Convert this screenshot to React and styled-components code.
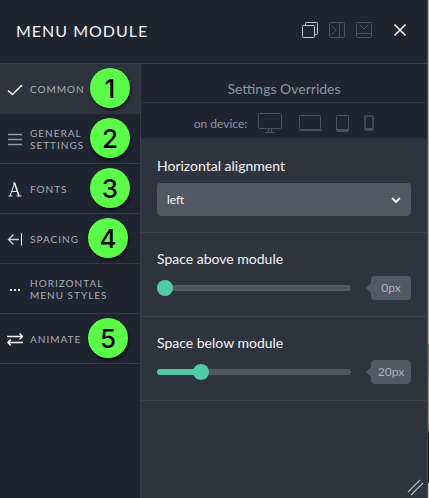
import { useState } from "react";
import styled, { createGlobalStyle } from "styled-components";

const GlobalStyle = createGlobalStyle`
  * {
    box-sizing: border-box;
  }
  body {
    margin: 0;
    background: linear-gradient(
      to bottom,
      #a9abb0 69%,
      #7d6468 69%,
      #9a7f78 78%,
      #8a8070 86%,
      #17181c 87%,
      #17181c 97%,
      #c4c6cc 97%
    );
    font-family: Lato, "Open Sans", sans-serif;
  }
  button, select, input {
    font-family: inherit;
  }
`;

const Panel = styled.div`
  position: relative;
  display: flex;
  flex-direction: column;
  min-height: 100vh;
  margin-right: 1px;
  border-right: 1px solid #444a54;
  background: #2e343e;
  color: #f4f5f7;
`;

const Header = styled.header`
  display: flex;
  align-items: center;
  justify-content: space-between;
  height: 64px;
  padding: 0 20px 4px 16px;
  border-bottom: 1px solid #3c424d;
  background: #1f2431;
`;

const Title = styled.h1`
  margin: 0;
  padding-top: 3px;
  font-size: 16px;
  font-weight: normal;
  line-height: 20px;
  letter-spacing: 1px;
`;

const Actions = styled.div`
  display: flex;
  align-items: center;
  gap: 11px;
`;

const IconButton = styled.button`
  display: flex;
  padding: 0;
  border: 0;
  margin-left: ${(props) => (props.$spaced ? "10px" : "0")};
  background: none;
  color: ${(props) => props.$color};
`;

const Body = styled.div`
  display: flex;
  flex: 1;
`;

const Sidebar = styled.nav`
  flex: none;
  width: 141px;
  border-right: 1px solid #363c47;
  background: #1f2431;
`;

const Tab = styled.button`
  position: relative;
  display: flex;
  align-items: center;
  gap: 7px;
  width: 100%;
  height: 50px;
  padding: 0 0 0 7px;
  border: 0;
  border-bottom: 1px solid ${(props) => (props.$active ? "#2e343e" : "#343a45")};
  background: ${(props) => (props.$active ? "#2e343e" : "#1f2431")};
  color: #a9adb8;
  font-size: 10px;
  line-height: 12px;
  letter-spacing: 1px;
  text-align: left;
  text-transform: uppercase;
`;

const TabLabel = styled.span`
  width: ${(props) => (props.$wide ? "90px" : "64px")};
`;

const Badge = styled.span`
  position: absolute;
  top: 4px;
  right: ${(props) => (props.$shifted ? "12px" : "10px")};
  width: 40px;
  height: 40px;
  border-radius: 50%;
  background: #5bfd49;
  box-shadow: 1px 2px 3px rgba(0, 0, 0, 0.7);
  color: #000;
  font-family: Inter, "Liberation Sans", sans-serif;
  font-size: 26px;
  font-weight: 500;
  line-height: 41px;
  letter-spacing: 0;
  text-align: center;
`;

const Content = styled.main`
  flex: 1;
  min-width: 0;
`;

const Overrides = styled.div`
  background: #1f2431;
  color: #8d95a5;
`;

const OverridesTitle = styled.h2`
  height: 39px;
  margin: 0;
  padding-top: 15px;
  border-bottom: 1px solid #2e343f;
  font-size: 14px;
  font-weight: normal;
  line-height: 20px;
  text-align: center;
`;

const Devices = styled.div`
  display: flex;
  align-items: center;
  justify-content: center;
  height: 35px;
  padding-top: 5px;
  font-size: 12px;
`;

const DeviceButton = styled(IconButton)`
  margin-left: ${(props) => props.$gap}px;
`;

const Section = styled.section`
  height: ${(props) => (props.$tall ? "95px" : "84px")};
  padding: ${(props) => (props.$tall ? "18px" : "16px")} 16px 0;
  border-bottom: 1px solid #3b414c;
`;

const Label = styled.label`
  display: block;
  font-size: 14px;
  line-height: 20px;
`;

const SelectWrap = styled.div`
  position: relative;
  margin-top: 7px;
  svg {
    position: absolute;
    top: 13px;
    right: 10px;
    pointer-events: none;
  }
`;

const Select = styled.select`
  appearance: none;
  display: block;
  width: 100%;
  height: 33px;
  padding: 0 10px;
  border: 0;
  border-radius: 4px;
  background: #505964;
  color: #f4f5f7;
  font-size: 12px;
`;

const SliderRow = styled.div`
  display: flex;
  align-items: center;
  gap: 20px;
  margin-top: 7px;
`;

const Range = styled.input`
  appearance: none;
  flex: 1;
  min-width: 0;
  height: 16px;
  margin: 0;
  background: none;
  &::-webkit-slider-runnable-track {
    height: 6px;
    border-radius: 3px;
    background: linear-gradient(
      to right,
      #50cba4 var(--fill),
      #505964 var(--fill)
    );
  }
  &::-webkit-slider-thumb {
    appearance: none;
    width: 16px;
    height: 16px;
    margin-top: -5px;
    border-radius: 50%;
    background: #50cba4;
  }
`;

const Value = styled.output`
  position: relative;
  flex: none;
  width: 40px;
  border-radius: 4px;
  background: #505964;
  color: #a8b4c2;
  font-size: 12px;
  line-height: 24px;
  text-align: center;
  &::before {
    content: "";
    position: absolute;
    top: 7px;
    right: 100%;
    border: 5px solid transparent;
    border-left: 0;
    border-right-color: #505964;
  }
`;

const ResizeHandle = styled.svg`
  position: absolute;
  right: 3px;
  bottom: 2px;
`;

function Icon({ width, height, children }) {
  return (
    <svg
      width={width}
      height={height}
      viewBox={`0 0 ${width} ${height}`}
      fill="none"
      stroke="currentColor"
      aria-hidden="true"
    >
      {children}
    </svg>
  );
}

const tabs = [
  {
    label: "Common",
    badge: 1,
    icon: <path d="M1 9.5L5.5 13.5L15 4" stroke="#fff" strokeWidth="1.5" />,
  },
  {
    label: "General settings",
    badge: 2,
    icon: <path d="M1 3.5H15M1 8.5H15M1 13.5H15" stroke="#9599a5" strokeWidth="1.5" />,
  },
  {
    label: "Fonts",
    badge: 3,
    icon: (
      <>
        <path d="M3 15L7.5 2.5M4.5 10.5H10.5M1.5 15H5.5M9.5 15H14.5M6 2H8.5" stroke="#e8eaee" />
        <path d="M7.5 2L12 15" stroke="#fff" strokeWidth="1.6" />
      </>
    ),
  },
  {
    label: "Spacing",
    badge: 4,
    shifted: true,
    icon: (
      <>
        <path d="M12 8.5H1.5M6.5 3.5L1.5 8.5L6.5 13.5" stroke="#c9ccd3" strokeWidth="1.4" />
        <path d="M14.5 2.5V14.5" stroke="#fff" />
      </>
    ),
  },
  {
    label: "Horizontal menu styles",
    wide: true,
    icon: <path d="M3 9H5M7 9H9M11 9H13" stroke="#e4e6ea" strokeWidth="2" />,
  },
  {
    label: "Animate",
    badge: 5,
    shifted: true,
    icon: (
      <path
        d="M0 5.5H15.5M12.5 2.5L15.5 5.5L12.5 8.5M16 11.5H.8M3.8 8.5L.8 11.5L3.8 14.5"
        stroke="#fff"
        strokeWidth="1.3"
      />
    ),
  },
];

function Slider({ id, label, initial }) {
  const [value, setValue] = useState(initial);
  return (
    <Section>
      <Label htmlFor={id}>{label}</Label>
      <SliderRow>
        <Range
          id={id}
          type="range"
          min="0"
          max="100"
          value={value}
          onChange={(e) => setValue(Number(e.target.value))}
          style={{ "--fill": `${value}%` }}
        />
        <Value htmlFor={id}>{value}px</Value>
      </SliderRow>
    </Section>
  );
}

export default function App() {
  const [active, setActive] = useState("Common");
  return (
    <>
      <GlobalStyle />
      <Panel>
        <Header>
          <Title>MENU MODULE</Title>
          <Actions>
            <IconButton $color="#c9ccd3" aria-label="Float panel">
              <Icon width={16} height={16}>
                <rect x=".5" y="3.5" width="12" height="12" rx="1" />
                <path d="M3.5 3.5V1.5Q3.5 .5 4.5 .5H14.5Q15.5 .5 15.5 1.5V11.5Q15.5 12.5 14.5 12.5H12.5" />
              </Icon>
            </IconButton>
            <IconButton $color="#4b515d" aria-label="Dock right">
              <Icon width={16} height={16}>
                <rect x=".5" y=".5" width="15" height="15" rx="1" />
                <path d="M10.5 .5V15.5M3 4L7 8L3 12" />
              </Icon>
            </IconButton>
            <IconButton $color="#4b515d" aria-label="Dock bottom">
              <Icon width={16} height={16}>
                <rect x=".5" y=".5" width="15" height="15" rx="1" />
                <path d="M.5 11.5H15.5M4 3L8 7L12 3" />
              </Icon>
            </IconButton>
            <IconButton $color="#fff" $spaced aria-label="Close">
              <Icon width={14} height={14}>
                <path d="M1.5 1.5L12.5 12.5M12.5 1.5L1.5 12.5" strokeWidth="1.7" />
              </Icon>
            </IconButton>
          </Actions>
        </Header>
        <Body>
          <Sidebar>
            {tabs.map((tab) => (
              <Tab
                key={tab.label}
                $active={tab.label === active}
                onClick={() => setActive(tab.label)}
              >
                <Icon width={16} height={16}>
                  {tab.icon}
                </Icon>
                <TabLabel $wide={tab.wide}>{tab.label}</TabLabel>
                {tab.badge && <Badge $shifted={tab.shifted}>{tab.badge}</Badge>}
              </Tab>
            ))}
          </Sidebar>
          <Content>
            <Overrides>
              <OverridesTitle>Settings Overrides</OverridesTitle>
              <Devices>
                on device:
                <DeviceButton $color="#4b515d" $gap={11} aria-label="Desktop">
                  <Icon width={24} height={20}>
                    <rect x=".5" y=".5" width="23" height="15" rx="1" />
                    <path d="M10.5 15.5V19M13.5 15.5V19M7 19.5H17" />
                  </Icon>
                </DeviceButton>
                <DeviceButton $color="#4b515d" $gap={16} aria-label="Laptop">
                  <Icon width={24} height={16}>
                    <rect x="1.5" y=".5" width="21" height="14" rx="1" />
                    <path d="M0 15.5H24" />
                  </Icon>
                </DeviceButton>
                <DeviceButton $color="#4b515d" $gap={14} aria-label="Tablet">
                  <Icon width={14} height={17}>
                    <rect x=".5" y=".5" width="12" height="16" rx="1" />
                    <path d="M1 15H12" strokeWidth="2" />
                  </Icon>
                </DeviceButton>
                <DeviceButton $color="#4b515d" $gap={14} aria-label="Phone">
                  <Icon width={10} height={16}>
                    <rect x="1" y="1" width="8" height="14" rx="1" strokeWidth="1.5" />
                    <path d="M1 14H9" strokeWidth="2" />
                  </Icon>
                </DeviceButton>
              </Devices>
            </Overrides>
            <Section $tall>
              <Label htmlFor="align">Horizontal alignment</Label>
              <SelectWrap>
                <Select id="align" defaultValue="left">
                  <option>left</option>
                  <option>center</option>
                  <option>right</option>
                </Select>
                <Icon width={10} height={8}>
                  <path d="M1 2L5 6L9 2" stroke="#fff" strokeWidth="1.8" />
                </Icon>
              </SelectWrap>
            </Section>
            <Slider id="above" label="Space above module" initial={0} />
            <Slider id="below" label="Space below module" initial={20} />
          </Content>
        </Body>
        <ResizeHandle width="17" height="17" stroke="#b4b9c1" fill="none" aria-hidden="true">
          <path d="M1 13L13 1M4 16L16 4" strokeWidth="1.2" />
        </ResizeHandle>
      </Panel>
    </>
  );
}
